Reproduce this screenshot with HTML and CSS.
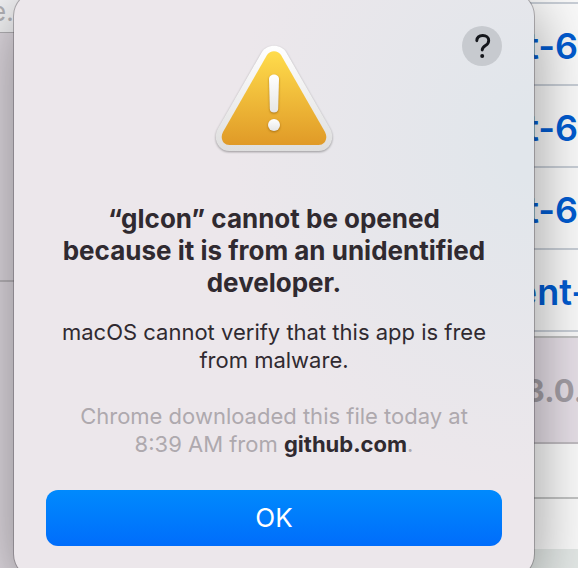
FILE: index.html
```html
<!DOCTYPE html>
<html lang="en">
<head>
<meta charset="utf-8">
<title>Alert</title>
<link rel="stylesheet" href="styles.css">
</head>
<body>
<div class="backdrop">
  <div class="pane pane-left">
    <div class="tab">e.</div>
    <div class="block"></div>
    <div class="block"></div>
  </div>
  <div class="pane pane-right">
    <div class="strip"></div>
    <div class="item">t-6</div>
    <div class="item">t-6</div>
    <div class="item">t-6</div>
    <div class="item item-wide">ent-</div>
    <div class="heading">3.0.</div>
    <div class="line"></div>
    <div class="line"></div>
    <div class="footer"></div>
  </div>
</div>
<main class="dialog" role="alertdialog" aria-labelledby="title" aria-describedby="message">
  <button class="help" aria-label="Help">
    <svg width="40" height="40" viewBox="0 0 40 40" fill="none">
      <path d="M14.8 14.700C15 11 17.200 9.500 20.800 9.500C24.200 9.500 26.700 11.400 26.700 14.400C26.700 16.800 25.500 18.200 23.500 19.500C21.200 21 20.200 22 20.200 24" stroke="#15171c" stroke-width="2.9" stroke-linecap="round" stroke-linejoin="round"/>
      <circle cx="20.200" cy="29.900" r="2" fill="#15171c"/>
    </svg>
  </button>
  <svg class="warning" width="128" height="116" viewBox="0 0 128 116" aria-hidden="true">
    <defs>
      <linearGradient id="rim" x1="0" y1="0" x2="0" y2="1"><stop offset="0" stop-color="#fff"/><stop offset="1" stop-color="#dedede"/></linearGradient>
      <linearGradient id="gold" x1="0" y1="0" x2="0" y2="1"><stop offset="0" stop-color="#ffdc4c"/><stop offset="1" stop-color="#e09a27"/></linearGradient>
      <linearGradient id="mark" x1="0" y1="0" x2="0" y2="1"><stop offset="0" stop-color="#fff"/><stop offset="1" stop-color="#e6e6e6"/></linearGradient>
    </defs>
    <path class="rim" d="M51.500 12.700C57 3.600 71 3.600 76.500 12.700L120.200 88.800C125.500 98.500 120 111 108.500 111H19.500C8 111 2.500 98.500 7.800 88.800Z" fill="url(#rim)"/>
    <path d="M57 15C60 9.900 68 9.900 71 15L115 92C118.200 98 115.200 105 108.500 105H19.500C12.800 105 9.800 98 13 92Z" fill="url(#gold)"/>
    <g class="mark" fill="url(#mark)">
      <path d="M59 39C59 33 69 33 69 39L68.200 69C68 73.700 60 73.700 59.800 69Z"/>
      <circle cx="64" cy="85" r="6"/>
    </g>
  </svg>
  <h1 id="title">“glcon” cannot be opened because it is from an unidentified developer.</h1>
  <p id="message">macOS cannot verify that this app is free from malware.</p>
  <p class="source">Chrome downloaded this file today at 8:39&nbsp;AM from <strong>github.com</strong>.</p>
  <button class="ok">OK</button>
</main>
</body>
</html>
```
FILE: styles.css
```css
* { box-sizing: border-box; }
body {
  margin: 0;
  position: relative;
  min-height: 100vh;
  overflow: hidden;
  font-family: Inter, "Liberation Sans", sans-serif;
  color: #302a30;
}
.backdrop {
  display: flex;
  justify-content: space-between;
  height: 100vh;
  background: #dcd5dd;
}
.pane { display: flex; flex-direction: column; }
.pane-left { width: 40px; }
.tab {
  height: 33px;
  margin-left: -9px;
  border-bottom: 1px solid #b4b2b6;
  background: #f5f5f7;
  color: #b5b4b8;
  font-size: 26px;
  line-height: 24px;
}
.block {
  height: 249px;
  border-bottom: 2px solid #bcb8bd;
  background: #e2dce3;
}
.block:last-child { flex: 1; border: 0; }
.pane-right { width: 140px; background: #fafafa; }
.strip { height: 2px; }
.item {
  height: 82px;
  border-top: 2px solid #c8ced6;
  color: #005bd0;
  font-size: 36px;
  font-weight: 600;
  line-height: 84px;
  text-align: right;
}
.item-wide { height: 84px; border-bottom: 2px solid #c8ced6; margin-right: -10px; }
.heading {
  height: 108px;
  margin-top: 4px;
  margin-right: -6px;
  border-top: 2px solid #c0c0c0;
  border-bottom: 2px solid #c0bcc1;
  background: #e6dfe7;
  color: #a39ea5;
  font-size: 31px;
  font-weight: 700;
  line-height: 106px;
  text-align: right;
}
.line { height: 55px; border-bottom: 2px solid #c2c3c3; }
.line + .line { height: 50px; border: 0; }
.footer { flex: 1; background: #e3e8e6; }
.dialog {
  position: absolute;
  top: -8px;
  left: 14px;
  right: 44px;
  display: flex;
  flex-direction: column;
  align-items: center;
  padding: 48px 32px 32px;
  border-radius: 24px;
  background:
    radial-gradient(ellipse 300px 340px at 100% 26%, #e1e6eb 10%, transparent),
    #ece7eb;
  box-shadow: 0 0 0 1px rgba(80, 76, 82, 0.4), 0 16px 64px rgba(0, 0, 0, 0.42);
  text-align: center;
}
button { border: 0; padding: 0; font-family: inherit; }
.help {
  position: absolute;
  top: 34px;
  right: 32px;
  width: 40px;
  height: 40px;
  border-radius: 50%;
  background: #c7cacf;
}
.help svg { display: block; }
.warning { overflow: visible; }
.rim { filter: drop-shadow(0 1px 1px rgba(0, 0, 0, 0.35)); }
.mark { filter: drop-shadow(0 1px 1px rgba(130, 80, 0, 0.6)); }
h1 {
  margin: 47px 0 0;
  padding: 0 12px;
  font-size: 26px;
  font-weight: 700;
  line-height: 32px;
}
p {
  margin: 19px 0 0;
  font-size: 22px;
  line-height: 28px;
}
.source { margin-top: 28px; color: #aea9ae; }
.source strong { color: #302a30; font-weight: 700; }
.ok {
  width: 100%;
  height: 56px;
  margin-top: 32px;
  border-radius: 12px;
  background: linear-gradient(#008afd, #006dfb);
  color: #fff;
  font-size: 26px;
  line-height: 54px;
}
```
